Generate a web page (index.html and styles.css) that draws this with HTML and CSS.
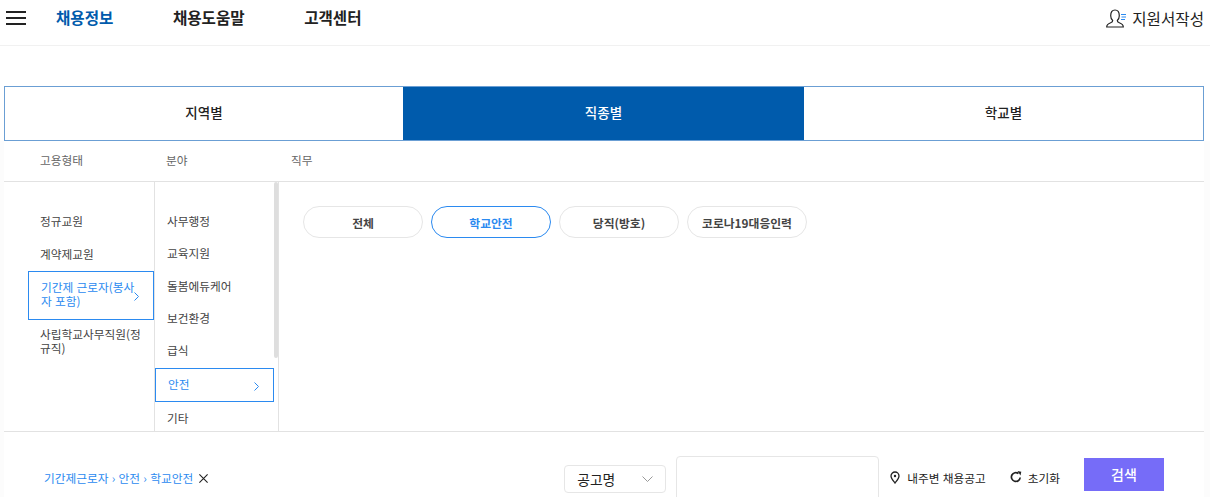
FILE: index.html
```html
<!DOCTYPE html>
<html lang="ko">
<head>
<meta charset="utf-8">
<title>채용정보</title>
<link rel="stylesheet" href="styles.css">
</head>
<body>
<header class="top">
  <svg class="burger" width="20" height="14" viewBox="0 0 20 14"><path d="M0 1h20M0 7h20M0 13h20" stroke="#222" stroke-width="2"/></svg>
  <nav class="gnb">
    <a class="gnb-item active">채용정보</a>
    <a class="gnb-item">채용도움말</a>
    <a class="gnb-item">고객센터</a>
  </nav>
  <a class="apply">
    <svg width="20" height="19" viewBox="0 0 20 19" fill="none"><path d="M.7 18c0-2.700 1.800-3.500 4-4.300 1.500-.5 2-1.200 2-2.200-1.200-1-2-2.700-2-4.700C4.700 3 6.300 1 9 1s4.300 2 4.300 5.800c0 2-.8 3.700-2 4.700 0 1 .5 1.700 2 2.200 2.200.8 4 1.600 4 4.300z" stroke="#222" stroke-width="1.200" fill="#fff"/><path d="M15 5.500h5M15.500 8h4.500M15 10.500h4" stroke="#2b8af0" stroke-width="1.100"/></svg>
    <span>지원서작성</span>
  </a>
</header>

<main class="wrap">
  <div class="tabs">
    <a class="tab">지역별</a>
    <a class="tab on">직종별</a>
    <a class="tab">학교별</a>
  </div>

  <div class="heads">
    <span class="head h1">고용형태</span>
    <span class="head h2">분야</span>
    <span class="head h3">직무</span>
  </div>

  <div class="panel">
    <ul class="col col1">
      <li class="row">정규교원</li>
      <li class="row">계약제교원</li>
      <li class="row sel">기간제 근로자(봉사자 포함)
        <svg class="chev" width="5" height="9" viewBox="0 0 5 9"><path d="M.5.5l4 4-4 4" fill="none" stroke="#2b8af0" stroke-width="1"/></svg>
      </li>
      <li class="row">사립학교사무직원(정규직)</li>
    </ul>
    <div class="col2">
      <ul class="list2">
        <li class="item">사무행정</li>
        <li class="item">교육지원</li>
        <li class="item">돌봄에듀케어</li>
        <li class="item">보건환경</li>
        <li class="item">급식</li>
        <li class="item sel2">안전
          <svg class="chev2" width="5" height="9" viewBox="0 0 5 9"><path d="M.5.5l4 4-4 4" fill="none" stroke="#2b8af0" stroke-width="1"/></svg>
        </li>
        <li class="item">기타</li>
      </ul>
      <span class="thumb"></span>
    </div>
    <div class="col3">
      <a class="pill">전체</a>
      <a class="pill on">학교안전</a>
      <a class="pill">당직(방호)</a>
      <a class="pill">코로나19대응인력</a>
    </div>
  </div>

  <div class="bottom">
    <div class="crumbs">
      <span>기간제근로자 › 안전 › 학교안전</span>
      <svg width="9" height="9" viewBox="0 0 9 9"><path d="M.4.400l8.200 8.200M8.600.400l-8.200 8.200" stroke="#222" stroke-width="1.100"/></svg>
    </div>
    <div class="search">
      <div class="select">
        <span>공고명</span>
        <svg width="11" height="6" viewBox="0 0 11 6"><path d="M.5.5l5 5 5-5" fill="none" stroke="#999"/></svg>
      </div>
      <div class="field"></div>
      <a class="tool near">
        <svg width="10" height="13" viewBox="0 0 10 13" fill="none"><path d="M5 12C3 9.500 1 7.500 1 5a4 4 0 0 1 8 0c0 2.500-2 4.500-4 7z" stroke="#222" stroke-width="1.300"/><circle cx="5" cy="5" r="1.200" fill="#222"/></svg>
        <span>내주변 채용공고</span>
      </a>
      <a class="tool reset">
        <svg width="12" height="12" viewBox="0 0 12 12" fill="none"><path d="M10.200 6.500A4.400 4.400 0 1 1 8.500 2.500" stroke="#222" stroke-width="1.700"/><path d="M7.500 0l3.800.7-.8 3.800z" fill="#222"/></svg>
        <span>초기화</span>
      </a>
      <button class="btn">검색</button>
    </div>
  </div>
</main>
</body>
</html>
```

FILE: styles.css
```css
* { box-sizing: border-box; }
html, body { margin: 0; padding: 0; height: 497px; overflow: hidden; }
body { font-family: "Noto Sans CJK KR", "Noto Sans", sans-serif; color: #222; background: linear-gradient(#fff 141px, #fcfcfc 141px); }
ul { list-style: none; margin: 0; padding: 0; }

.top { height: 46px; display: flex; align-items: flex-start; padding: 0 6px; border-bottom: 1px solid #f1f1f1; }
.burger { margin-top: 11px; flex: none; }
.gnb { display: flex; margin-left: 30px; gap: 59.500px; }
.gnb-item { font-size: 15.600px; font-weight: 700; line-height: 35px; color: #222; }
.gnb-item.active { color: #005bac; }
.apply { margin-left: auto; display: flex; align-items: flex-start; gap: 6px; font-size: 15.600px; line-height: 36px; }
.apply svg { margin-top: 9px; }

.wrap { margin: 40px 6px 0 4px; background: #fff; }
.tabs { display: grid; grid-template-columns: 398px 401px 1fr; height: 55px; border: 1px solid #6b9fd4; }
.tab { display: flex; align-items: center; justify-content: center; padding-bottom: 3px; font-size: 13.500px; font-weight: 500; color: #222; }
.tab.on { background: #005bac; color: #fff; }

.heads { display: flex; height: 41px; align-items: center; padding-bottom: 3px; font-size: 11.700px; color: #666; border-bottom: 1px solid #e2e2e2; }
.h1 { margin-left: 36px; width: 126px; }
.h2 { width: 125px; }

.panel { display: flex; height: 250px; border-bottom: 1px solid #e2e2e2; }
.col1 { width: 151px; padding: 22px 0 0 24px; flex: none; border-right: 1px solid #e2e2e2; }
.col1 .row { position: relative; font-size: 11.700px; line-height: 14px; color: #444; padding: 10px 8px 9px 12px; }
.col1 .row:nth-child(2) { padding-bottom: 10px; }
.col1 .row.sel { color: #2b8af0; border: 1px solid #2b8af0; height: 49px; margin-bottom: -3px; padding: 8px 14px 0 12px; }
.chev { position: absolute; right: 14px; top: 20px; }

.col2 { position: relative; width: 124px; flex: none; border-right: 1px solid #e2e2e2; padding-right: 4px; overflow: hidden; }
.list2 { padding-top: 23px; }
.item { position: relative; font-size: 11.700px; line-height: 32.300px; height: 32.300px; color: #444; padding-left: 12px; }
.item.sel2 { color: #2b8af0; border: 1px solid #2b8af0; height: 34px; margin-top: 1.500px; line-height: 30px; }
.chev2 { position: absolute; right: 14px; top: 13px; }
.thumb { position: absolute; right: 0; top: 0; width: 4px; height: 176px; background: #dedede; border-radius: 2px; }

.col3 { flex: 1; display: flex; align-items: flex-start; gap: 8px; padding: 24px 0 0 24px; }
.pill { width: 120px; height: 32px; display: flex; align-items: center; justify-content: center; font-size: 11.800px; font-weight: 700; color: #444; border: 1px solid #e6e6e6; border-radius: 16px; }
.pill.on { color: #2b8af0; border-color: #2b8af0; }

.bottom { display: flex; align-items: flex-start; justify-content: space-between; height: 70px; padding: 24px 40px 0; }
.crumbs { display: flex; align-items: center; gap: 6px; font-size: 11.700px; line-height: 44px; color: #2b8af0; }
.crumbs svg { margin-top: 1px; }
.search { display: flex; align-items: flex-start; }
.select { width: 102px; height: 28px; margin-top: 9px; padding: 0 12px; display: flex; align-items: center; justify-content: space-between; border: 1px solid #e6e6e6; border-radius: 4px; font-size: 13.800px; }
.field { width: 203px; height: 60px; margin-left: 10px; border: 1px solid #e6e6e6; border-radius: 4px; }
.tool { display: flex; align-items: center; gap: 7px; height: 42px; font-size: 11.700px; color: #222; }
.near { margin-left: 11px; }
.reset { margin-left: 24px; gap: 6px; }
.btn { width: 80px; height: 33px; margin: 2px 0 0 24px; padding: 0 0 2px; border: 0; background: #766cf8; color: #fff; font: 500 14px "Noto Sans CJK KR", sans-serif; }
```
